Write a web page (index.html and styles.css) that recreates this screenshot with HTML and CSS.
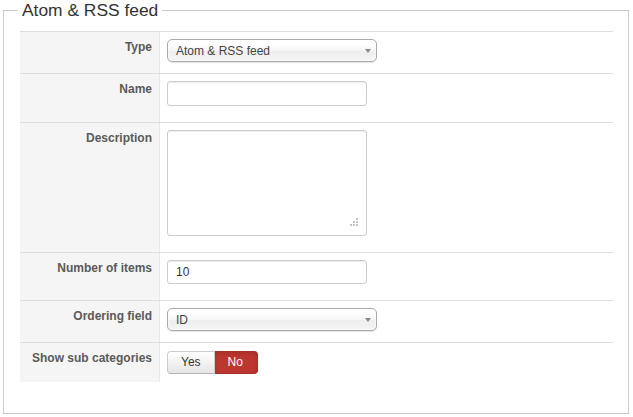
FILE: index.html
```html
<!DOCTYPE html>
<html>
<head>
<meta charset="utf-8">
<link rel="stylesheet" href="styles.css">
</head>
<body>
<fieldset class="panel">
  <legend class="panel-title">Atom &amp; RSS feed</legend>
  <div class="form">
    <div class="row">
      <div class="label">Type</div>
      <div class="control">
        <div class="select"><span>Atom &amp; RSS feed</span><i class="caret"></i></div>
      </div>
    </div>
    <div class="row">
      <div class="label">Name</div>
      <div class="control">
        <input class="input" type="text" value="">
      </div>
    </div>
    <div class="row">
      <div class="label">Description</div>
      <div class="control">
        <div class="textarea-wrap">
          <textarea class="textarea"></textarea>
          <svg class="grip" width="9" height="9" viewBox="0 0 9 9">
            <rect x="7" y="0" width="2" height="2"/>
            <rect x="4" y="3" width="2" height="2"/>
            <rect x="7" y="3" width="2" height="2"/>
            <rect x="1" y="6" width="2" height="2"/>
            <rect x="4" y="6" width="2" height="2"/>
            <rect x="7" y="6" width="2" height="2"/>
          </svg>
        </div>
      </div>
    </div>
    <div class="row">
      <div class="label">Number of items</div>
      <div class="control">
        <input class="input input-short" type="text" value="10">
      </div>
    </div>
    <div class="row">
      <div class="label">Ordering field</div>
      <div class="control">
        <div class="select"><span>ID</span><i class="caret"></i></div>
      </div>
    </div>
    <div class="row">
      <div class="label">Show sub categories</div>
      <div class="control">
        <div class="toggle">
          <span class="btn btn-yes">Yes</span>
          <span class="btn btn-no">No</span>
        </div>
      </div>
    </div>
  </div>
</fieldset>
</body>
</html>
```
FILE: styles.css
```css
html, body {
  margin: 0;
  padding: 0;
  background: #fff;
}
body {
  font-family: "Liberation Sans", Arial, sans-serif;
  color: #333;
}
.panel {
  margin: 0 4px 0 3px;
  padding: 10px 15px 31px 16px;
  border: 1px solid #ccc;
  min-width: 0;
}
.panel-title {
  font-size: 17.4px;
  line-height: 21px;
  padding: 0 4px;
  margin-left: -2px;
  color: #333;
}
.row {
  display: flex;
  border-top: 1px solid #ddd;
}
.label {
  flex: 0 0 140px;
  box-sizing: border-box;
  background: #f5f5f5;
  border-right: 1px solid #e8e8e8;
  text-align: right;
  padding: 6px 7px 0 0;
  font-weight: bold;
  font-size: 12px;
  line-height: 18px;
  color: #5a5a5a;
}
.control {
  flex: 1;
  padding: 7px 7px 0 7px;
}
.select {
  width: 210px;
  height: 23px;
  box-sizing: border-box;
  border: 1px solid #aaa;
  border-radius: 5px;
  background: linear-gradient(#fff 20%, #f6f6f6 50%, #eee 52%, #f4f4f4 100%);
  box-shadow: inset 0 0 3px #fff, 0 1px 1px rgba(0, 0, 0, 0.1);
  display: flex;
  align-items: center;
  justify-content: space-between;
  padding: 0 5px 0 8px;
  margin-bottom: 11px;
  font-size: 12px;
  color: #444;
}
.caret {
  width: 0;
  height: 0;
  border-left: 3px solid transparent;
  border-right: 3px solid transparent;
  border-top: 4px solid #888;
}
.input {
  display: block;
  width: 200px;
  height: 25px;
  box-sizing: border-box;
  border: 1px solid #ccc;
  border-radius: 3px;
  box-shadow: inset 0 1px 1px rgba(0, 0, 0, 0.075);
  padding: 0 8px;
  margin: 0 0 16px 0;
  font-family: "Liberation Sans", Arial, sans-serif;
  font-size: 12px;
  color: #333;
  background: #fff;
}
.input-short {
  height: 24px;
}
.textarea-wrap {
  position: relative;
  width: 200px;
  height: 106px;
  margin-bottom: 16px;
}
.textarea {
  display: block;
  width: 200px;
  height: 106px;
  box-sizing: border-box;
  border: 1px solid #ccc;
  border-radius: 3px;
  box-shadow: inset 0 1px 1px rgba(0, 0, 0, 0.075);
  margin: 0;
  padding: 4px 8px;
  resize: none;
  background: #fff;
}
.grip {
  position: absolute;
  right: 9px;
  bottom: 9px;
  fill: #c4c4c4;
}
.toggle {
  display: flex;
  margin: 1px 0 8px 0;
}
.btn {
  display: block;
  height: 23px;
  box-sizing: border-box;
  padding: 0 13px;
  font-size: 12px;
  line-height: 21px;
}
.btn-yes {
  background: linear-gradient(#fff, #e6e6e6);
  border: 1px solid #ccc;
  border-bottom-color: #b3b3b3;
  border-radius: 4px 0 0 4px;
  color: #333;
}
.btn-no {
  background: #bd362f;
  border: 1px solid #a52f29;
  border-left: 0;
  border-radius: 0 4px 4px 0;
  color: #fff;
  padding: 0 14px 0 13px;
  box-shadow: inset 0 2px 4px rgba(0, 0, 0, 0.12);
}
```
